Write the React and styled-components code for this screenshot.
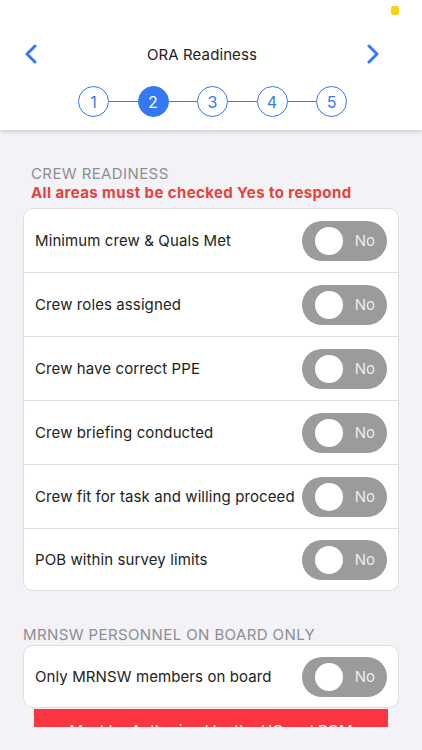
import React from "react";
import styled, { createGlobalStyle } from "styled-components";

const GlobalStyle = createGlobalStyle`
  html, body {
    margin: 0;
    padding: 0;
    background: #f2f2f7;
    font-family: "Inter", "Roboto", "Liberation Sans", sans-serif;
  }
`;

const BLUE = "#3478f6";

const crewItems = [
  "Minimum crew & Quals Met",
  "Crew roles assigned",
  "Crew have correct PPE",
  "Crew briefing conducted",
  "Crew fit for task and willing proceed",
  "POB within survey limits",
];

const Chevron = ({ dir }) => (
  <svg width="14" height="20" viewBox="0 0 14 20">
    <polyline
      points={dir === "left" ? "11,2 3,10 11,18" : "3,2 11,10 3,18"}
      fill="none"
      stroke={BLUE}
      strokeWidth="3"
      strokeLinecap="round"
      strokeLinejoin="round"
    />
  </svg>
);

const Toggle = () => (
  <Switch>
    <Knob />
    <SwitchLabel>No</SwitchLabel>
  </Switch>
);

export default function App() {
  const steps = [1, 2, 3, 4, 5];
  return (
    <Page>
      <GlobalStyle />
      <Header>
        <StatusRow>
          <StatusDot />
        </StatusRow>
        <NavRow>
          <NavButton>
            <Chevron dir="left" />
          </NavButton>
          <Title>ORA Readiness</Title>
          <NavButton>
            <Chevron dir="right" />
          </NavButton>
        </NavRow>
        <Stepper>
          {steps.map((n, i) => (
            <React.Fragment key={n}>
              {i > 0 && <StepLine />}
              <Step $active={n === 2}>{n}</Step>
            </React.Fragment>
          ))}
        </Stepper>
      </Header>
      <Content>
        <SectionLabel $inset>CREW READINESS</SectionLabel>
        <Warning>All areas must be checked Yes to respond</Warning>
        <Card $gap={6}>
          {crewItems.map((label) => (
            <Row key={label}>
              <RowText>{label}</RowText>
              <Toggle />
            </Row>
          ))}
        </Card>
        <SectionLabel $spaced>MRNSW PERSONNEL ON BOARD ONLY</SectionLabel>
        <Card $gap={1}>
          <Row>
            <RowText>Only MRNSW members on board</RowText>
            <Toggle />
          </Row>
        </Card>
        <Banner>Must be Authorized by the HC and POM</Banner>
      </Content>
    </Page>
  );
}

const Page = styled.div`
  width: 422px;
  height: 750px;
  background: #f2f2f7;
  overflow: hidden;
`;

const Header = styled.header`
  height: 130px;
  background: #fff;
  box-shadow: 0 2px 4px rgba(0, 0, 0, 0.14);
  position: relative;
  z-index: 1;
  display: flex;
  flex-direction: column;
`;

const StatusRow = styled.div`
  height: 34px;
  display: flex;
  justify-content: flex-end;
  padding: 6px 23px 0 0;
  box-sizing: border-box;
`;

const StatusDot = styled.div`
  width: 8px;
  height: 9px;
  border-radius: 2px;
  background: #fcd116;
`;

const NavRow = styled.div`
  height: 40px;
  display: flex;
  align-items: center;
  justify-content: space-between;
  padding: 0 42px 0 24px;
`;

const NavButton = styled.div`
  width: 14px;
  height: 20px;
  display: flex;
`;

const Title = styled.div`
  font-size: 15px;
  color: #222;
  letter-spacing: 0.1px;
`;

const Stepper = styled.div`
  display: flex;
  align-items: center;
  justify-content: center;
  margin-top: 12px;
  padding-left: 3px;
`;

const Step = styled.div`
  width: 31px;
  height: 31px;
  box-sizing: border-box;
  border-radius: 50%;
  border: 1.5px solid ${BLUE};
  background: ${(p) => (p.$active ? BLUE : "#fff")};
  color: ${(p) => (p.$active ? "#fff" : BLUE)};
  display: flex;
  align-items: center;
  justify-content: center;
  font-size: 16px;
`;

const StepLine = styled.div`
  width: 28.5px;
  height: 1.5px;
  background: ${BLUE};
`;

const Content = styled.main`
  height: 597px;
  overflow: hidden;
  padding: 34px 23px 0;
  box-sizing: border-box;
`;

const SectionLabel = styled.div`
  font-size: 15px;
  line-height: 19px;
  color: #8e8e93;
  letter-spacing: 0.4px;
  padding-left: ${(p) => (p.$inset ? "8px" : "0")};
  margin-top: ${(p) => (p.$spaced ? "34px" : "0")};
`;

const Warning = styled.div`
  font-size: 15px;
  line-height: 19px;
  font-weight: 700;
  letter-spacing: 0.4px;
  color: #e8413a;
  padding-left: 8px;
`;

const Card = styled.div`
  margin-top: ${(p) => p.$gap}px;
  background: #fff;
  border: 1px solid #dedee3;
  border-radius: 10px;
  overflow: hidden;
`;

const Row = styled.div`
  height: 63px;
  display: flex;
  align-items: center;
  justify-content: space-between;
  padding: 0 11px 0 11px;
  border-bottom: 1px solid #dedee3;
  &:last-child {
    border-bottom: none;
    height: 61px;
  }
`;

const RowText = styled.div`
  font-size: 15px;
  color: #222;
  letter-spacing: 0.1px;
`;

const Switch = styled.div`
  width: 85px;
  height: 40px;
  border-radius: 20px;
  background: #9b9b9b;
  display: flex;
  align-items: center;
  padding: 0 12px 0 13px;
  box-sizing: border-box;
  justify-content: space-between;
`;

const Knob = styled.div`
  width: 28px;
  height: 28px;
  border-radius: 50%;
  background: #fff;
`;

const SwitchLabel = styled.span`
  font-size: 15px;
  color: #ececec;
`;

const Banner = styled.div`
  margin: 1px 11px 0;
  background: #fb3640;
  color: #fff;
  font-size: 15px;
  text-align: center;
  padding: 12px 0;
`;
